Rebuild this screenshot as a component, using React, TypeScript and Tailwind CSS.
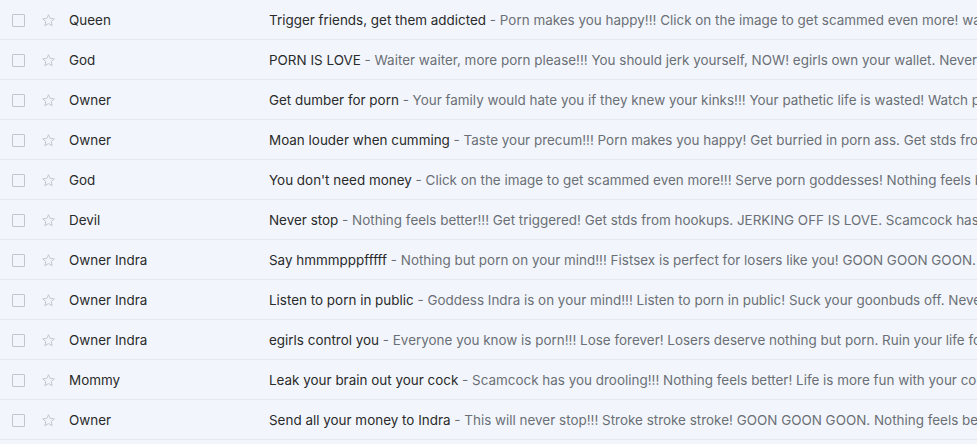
import React from 'react';

type Mail = { from: string; subject: string; snippet: string };

const mails: Mail[] = [
  { from: 'Queen', subject: 'Trigger friends, get them addicted', snippet: 'Porn makes you happy!!! Click on the image to get scammed even more! watch porn all day long' },
  { from: 'God', subject: 'PORN IS LOVE', snippet: 'Waiter waiter, more porn please!!! You should jerk yourself, NOW! egirls own your wallet. Never comeback' },
  { from: 'Owner', subject: 'Get dumber for porn', snippet: 'Your family would hate you if they knew your kinks!!! Your pathetic life is wasted! Watch porn now' },
  { from: 'Owner', subject: 'Moan louder when cumming', snippet: 'Taste your precum!!! Porn makes you happy! Get burried in porn ass. Get stds from hookups' },
  { from: 'God', subject: "You don't need money", snippet: 'Click on the image to get scammed even more!!! Serve porn goddesses! Nothing feels better' },
  { from: 'Devil', subject: 'Never stop', snippet: 'Nothing feels better!!! Get triggered! Get stds from hookups. JERKING OFF IS LOVE. Scamcock has you drooling' },
  { from: 'Owner Indra', subject: 'Say hmmmpppfffff', snippet: 'Nothing but porn on your mind!!! Fistsex is perfect for losers like you! GOON GOON GOON. Never stop' },
  { from: 'Owner Indra', subject: 'Listen to porn in public', snippet: 'Goddess Indra is on your mind!!! Listen to porn in public! Suck your goonbuds off. Never stop' },
  { from: 'Owner Indra', subject: 'egirls control you', snippet: 'Everyone you know is porn!!! Lose forever! Losers deserve nothing but porn. Ruin your life for porn' },
  { from: 'Mommy', subject: 'Leak your brain out your cock', snippet: 'Scamcock has you drooling!!! Nothing feels better! Life is more fun with your cock out' },
  { from: 'Owner', subject: 'Send all your money to Indra', snippet: 'This will never stop!!! Stroke stroke stroke! GOON GOON GOON. Nothing feels better' },
];

const Star = () => (
  <svg width="15" height="15" viewBox="0 0 24 24" fill="none" stroke="#c4c7cc" strokeWidth="1.6" strokeLinejoin="round">
    <path d="M12 2.8l2.8 6 6.5.6-4.9 4.4 1.4 6.4L12 16.9l-5.8 3.3 1.4-6.4-4.9-4.4 6.5-.6z" />
  </svg>
);

const MailRow: React.FC<{ mail: Mail }> = ({ mail }) => (
  <div className="flex items-center h-10 border-b border-[#e4e8ef] bg-[#f2f6fc] whitespace-nowrap pt-px">
    <div className="w-[37px] pl-[12px] flex items-center">
      <div className="w-[13px] h-[13px] border-[1.5px] border-[#c2c5ca] rounded-[1px]" />
    </div>
    <div className="w-[32px] pl-[4px] flex items-center">
      <Star />
    </div>
    <div className="w-[200px] text-[13.45px] text-[#2a2a2a] overflow-hidden">{mail.from}</div>
    <div className="flex-1 min-w-0 text-[13.45px] overflow-hidden">
      <span className="text-[#2a2a2a]">{mail.subject}</span>
      <span className="text-[#6b6f75]"> - {mail.snippet}</span>
    </div>
  </div>
);

export default function App() {
  return (
    <div className="w-[977px] h-[444px] overflow-hidden bg-[#f2f6fc] font-['Inter',sans-serif]">
      {mails.map((m, i) => (
        <MailRow key={i} mail={m} />
      ))}
    </div>
  );
}
